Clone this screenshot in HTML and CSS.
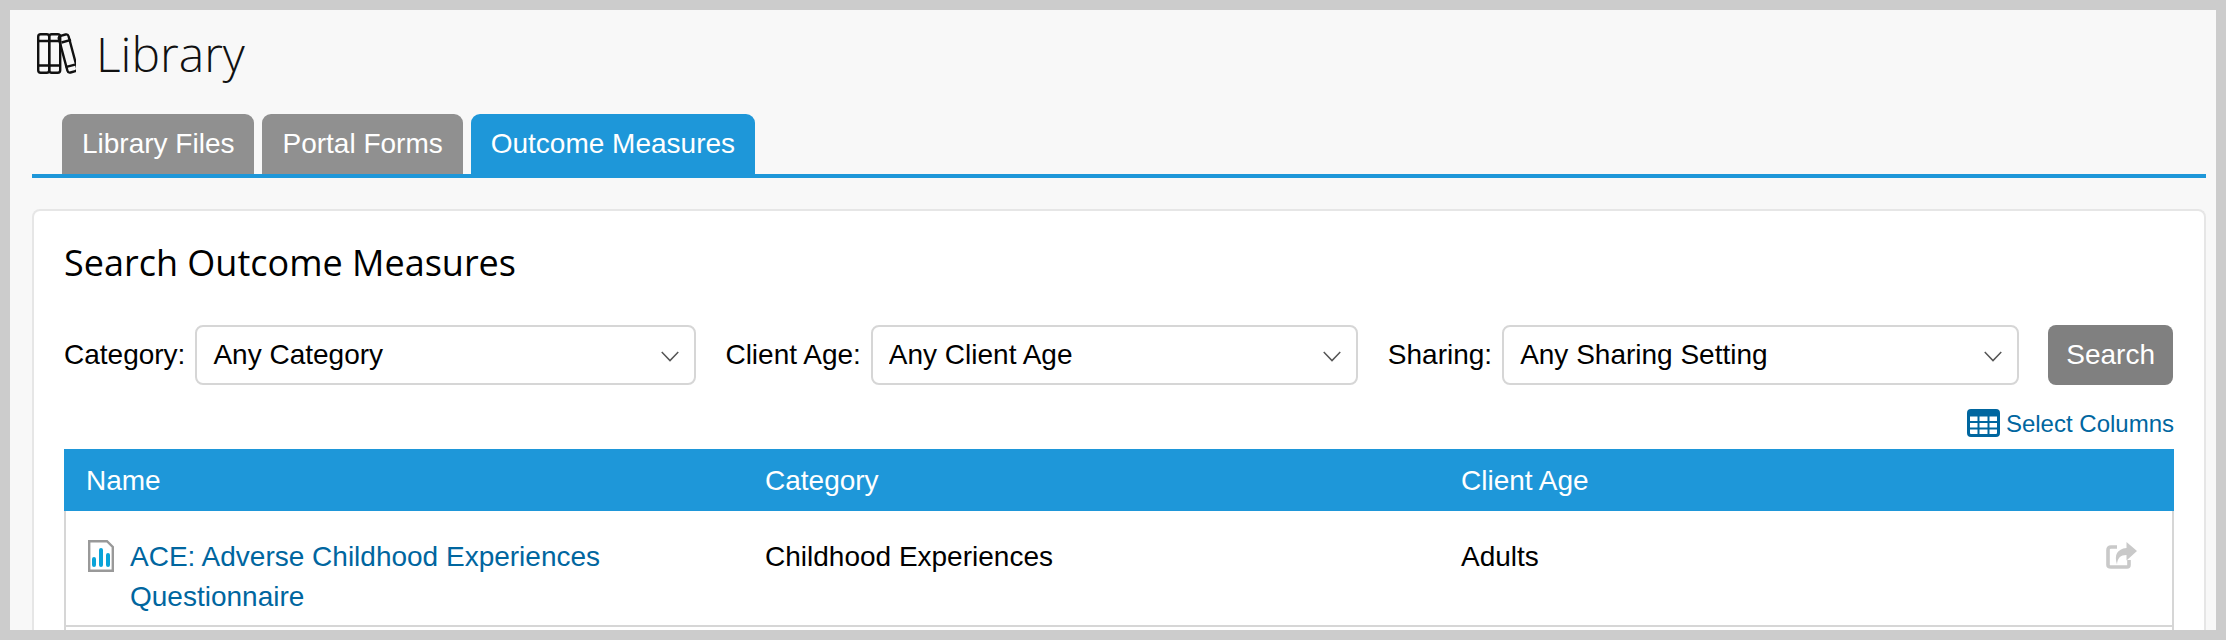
FILE: index.html
```html
<!DOCTYPE html>
<html lang="en">
<head>
<meta charset="utf-8">
<title>Library</title>
<link rel="stylesheet" href="styles.css">
</head>
<body>
<main class="page">
  <header class="title">
    <svg class="title-icon" viewBox="0 0 39 41" fill="none" stroke="#111" stroke-width="2.4" stroke-linejoin="round">
      <rect x="1.2" y="1.2" width="11" height="38.6" rx="2.5"/>
      <rect x="12.2" y="1.2" width="11" height="38.6" rx="2.5"/>
      <path d="M1.2 8h22M1.2 32.5h22"/>
      <rect x="-5" y="-19" width="10" height="38" rx="2.5" transform="translate(31 20.5) rotate(-15)"/>
      <path d="M24.5 9.5l9.5-2.6M28.5 34.2l9.5-2.6"/>
    </svg>
    <h1>Library</h1>
  </header>
  <nav class="tabs">
    <a class="tab">Library Files</a>
    <a class="tab">Portal Forms</a>
    <a class="tab active">Outcome Measures</a>
  </nav>
  <section class="card">
    <h2>Search Outcome Measures</h2>
    <form class="filters">
      <label class="filter-label">Category:</label>
      <div class="select select-a">
        <select><option>Any Category</option></select>
        <svg class="chev" viewBox="0 0 20 12" fill="none" stroke="#555" stroke-width="1.6"><path d="M1 1l9 9.5L19 1"/></svg>
      </div>
      <label class="filter-label">Client Age:</label>
      <div class="select select-b">
        <select><option>Any Client Age</option></select>
        <svg class="chev" viewBox="0 0 20 12" fill="none" stroke="#555" stroke-width="1.6"><path d="M1 1l9 9.5L19 1"/></svg>
      </div>
      <label class="filter-label">Sharing:</label>
      <div class="select select-c">
        <select><option>Any Sharing Setting</option></select>
        <svg class="chev" viewBox="0 0 20 12" fill="none" stroke="#555" stroke-width="1.6"><path d="M1 1l9 9.5L19 1"/></svg>
      </div>
      <button class="search" type="button">Search</button>
    </form>
    <div class="columns-row">
      <a class="columns-link">
        <svg class="grid-icon" viewBox="0 0 33 28">
          <rect x="1.5" y="1.5" width="30" height="25" rx="2.5" fill="none" stroke="#00669f" stroke-width="3"/>
          <path d="M1 13h31M1 19.500h31M11.500 7v19M21.500 7v19" stroke="#00669f" stroke-width="2"/>
          <path d="M1 3h31v4.500H1z" fill="#00669f"/>
        </svg>
        <span class="columns-text">Select Columns</span>
      </a>
    </div>
    <table class="results">
      <colgroup><col class="col-name"><col class="col-cat"><col class="col-age"><col></colgroup>
      <thead>
        <tr><th>Name</th><th>Category</th><th>Client Age</th><th></th></tr>
      </thead>
      <tbody>
        <tr>
          <td>
            <div class="name-cell">
              <svg class="file-icon" viewBox="0 0 26 32">
                <path d="M1.2 1.2h17.8l5.8 5.8v23.800H1.2z" fill="#fff" stroke="#999" stroke-width="2.4"/>
                <path d="M6 19v6M13 10v15M20 15v10" stroke="#0aa3d8" stroke-width="4" stroke-linecap="round"/>
              </svg>
              <a class="name-link">ACE: Adverse Childhood Experiences Questionnaire</a>
            </div>
          </td>
          <td>Childhood Experiences</td>
          <td>Adults</td>
          <td class="share-cell">
            <svg class="share-icon" viewBox="0 0 31 27">
              <path d="M11 5H5Q2 5 2 8v15q0 2 3 2h16q2 0 2-2v-5" fill="none" stroke="#c9c9c9" stroke-width="3.600"/>
              <path d="M20.500 0L31 9l-10.500 9.500V13c-6 0-9 3-9.500 9.500C8 13 11 7 20.500 6z" fill="#c9c9c9"/>
            </svg>
          </td>
        </tr>
        <tr class="next-row"><td colspan="4"></td></tr>
      </tbody>
    </table>
  </section>
</main>
</body>
</html>
```
FILE: styles.css
```css
* { box-sizing: border-box; }
html, body { margin: 0; height: 640px; overflow: hidden; }
body {
  background: #cccccc;
  padding: 10px;
  font-family: "Liberation Sans", Arial, sans-serif;
  color: #000;
}
.page {
  background: #f8f8f8;
  height: 620px;
  padding: 23px 10px 0 22px;
  overflow: hidden;
}
.title { display: flex; align-items: center; gap: 20px; height: 41px; margin-left: 5px; }
.title-icon { width: 39px; height: 41px; flex: none; }
h1 {
  margin: 0;
  font: 300 48px/41px "Open Sans", sans-serif;
  color: #111;
}
.tabs {
  display: flex;
  gap: 8px;
  margin-top: 40px;
  padding-left: 30px;
  height: 64px;
  border-bottom: 4px solid #1e97d9;
}
.tab {
  height: 60px;
  padding: 0 20px;
  background: #909090;
  color: #fff;
  font-size: 28px;
  line-height: 60px;
  border-radius: 9px 9px 0 0;
}
.tab.active { background: #1e97d9; }
.card {
  margin: 31px 0 0 0;
  background: #fff;
  border: 2px solid #e6e6e6;
  border-bottom: 0;
  border-radius: 8px 8px 0 0;
  padding: 0 30px;
  height: 500px;
}
h2 {
  margin: 0;
  padding-top: 30px;
  font: 400 36px/44px "Open Sans", sans-serif;
  color: #000;
}
.filters { display: flex; align-items: center; margin-top: 40px; height: 60px; }
.filter-label { font-size: 28px; white-space: nowrap; margin-right: 10px; }
.select { position: relative; height: 60px; margin-right: 29px; }
.select-a { width: 501px; }
.select-b { width: 487px; margin-right: 30px; }
.select-c { width: 517px; }
.select select {
  appearance: none;
  width: 100%;
  height: 100%;
  border: 2px solid #d6d6d6;
  border-radius: 8px;
  background: #fff;
  padding: 0 15px 2px 16px;
  font: 28px "Liberation Sans", Arial, sans-serif;
  color: #000;
}
.chev { position: absolute; right: 16px; top: 26px; width: 20px; height: 11px; }
.search {
  width: 125px;
  height: 60px;
  border: 0;
  border-radius: 8px;
  background: #808080;
  color: #fff;
  font: 28px "Liberation Sans", Arial, sans-serif;
}
.columns-row { display: flex; justify-content: flex-end; margin-top: 24px; height: 40px; }
.columns-link { display: flex; align-items: center; gap: 6px; color: #00669f; font-size: 24px; line-height: 28px; height: 28px; }
.columns-text { padding-top: 2px; }
.grid-icon { width: 33px; height: 28px; flex: none; }
.results { width: 100%; border-collapse: separate; border-spacing: 0; table-layout: fixed; }
.col-name { width: 679px; }
.col-cat { width: 696px; }
.col-age { width: 560px; }
.results th {
  height: 62px;
  padding: 1px 22px 0;
  background: #1e97d9;
  color: #fff;
  font-size: 28px;
  font-weight: 400;
  text-align: left;
}
.results td {
  padding: 26px 22px 8px;
  border-bottom: 2px solid #d6d6d6;
  font-size: 28px;
  line-height: 40px;
  vertical-align: top;
}
.results td:first-child { border-left: 2px solid #d6d6d6; padding-left: 20px; }
.results td:last-child { border-right: 2px solid #d6d6d6; }
.results .next-row td { height: 80px; padding: 0; }
.name-cell { display: flex; gap: 16px; }
.file-icon { width: 26px; height: 32px; flex: none; margin: 3px 0 0 2px; }
.name-link { color: #00669f; }
.share-cell { text-align: right; }
.results td.share-cell { padding-right: 35px; }
.share-icon { width: 31px; height: 27px; display: inline-block; vertical-align: top; margin-top: 5px; }
```
